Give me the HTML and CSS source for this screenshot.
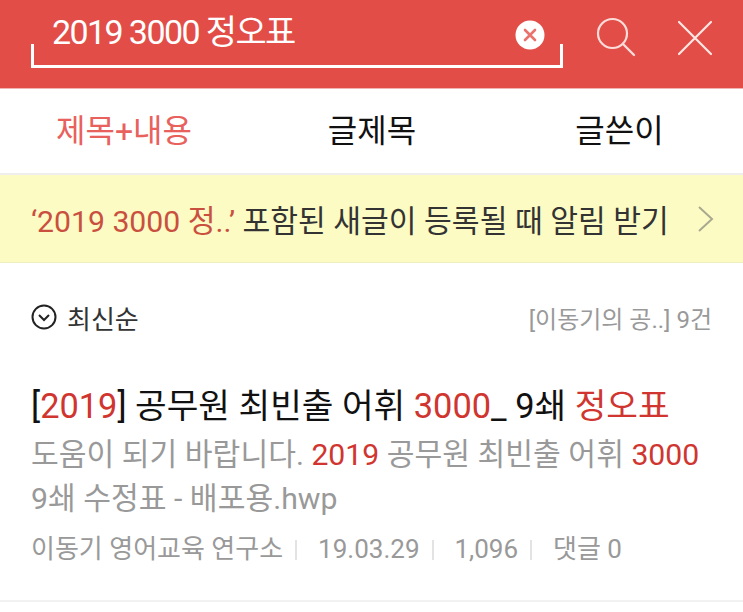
FILE: index.html
```html
<!DOCTYPE html>
<html lang="ko">
<head>
    <meta charset="UTF-8" />
    <link rel="stylesheet" href="styles.css">
</head>
<body>
    <header class="search-bar">
        <div class="search-box">
            <span class="search-text">2019 3000 정오표</span>
            <svg class="clear-icon" width="30" height="30" viewBox="0 0 30 30">
                <circle cx="15" cy="15" r="14.5" fill="#fff" />
                <path d="M10 10L20 20M20 10L10 20" stroke="#e9736c" stroke-width="2.6" stroke-linecap="round" />
            </svg>
        </div>
        <svg class="search-icon" width="40" height="40" viewBox="0 0 40 40">
            <circle cx="16.5" cy="16.5" r="14.5" fill="none" stroke="#fbdcd9" stroke-width="2.2" />
            <path d="M27 27L38 38" stroke="#fbdcd9" stroke-width="2.4" stroke-linecap="round" />
        </svg>
        <svg class="close-icon" width="36" height="36" viewBox="0 0 36 36">
            <path d="M2 2L34 34M34 2L2 34" stroke="#fde6e4" stroke-width="2.2" stroke-linecap="round" />
        </svg>
    </header>

    <nav class="tabs">
        <a class="active">제목+내용</a>
        <a>글제목</a>
        <a>글쓴이</a>
    </nav>

    <div class="notice">
        <p><em>‘2019 3000 정..’</em> 포함된 새글이 등록될 때 알림 받기</p>
        <svg width="18" height="28" viewBox="0 0 18 28">
            <path d="M2 2L15 14L2 26" fill="none" stroke="#a9a98f" stroke-width="2" />
        </svg>
    </div>

    <div class="sort-row">
        <div class="sort">
            <svg width="26" height="26" viewBox="0 0 26 26">
                <circle cx="13" cy="13" r="11.5" fill="none" stroke="#222" stroke-width="2" />
                <path d="M8 11L13 16L18 11" fill="none" stroke="#222" stroke-width="2" />
            </svg>
            <span>최신순</span>
        </div>
        <div class="count">[이동기의 공..] 9건</div>
    </div>

    <article class="result">
        <h3>[<b>2019</b>] 공무원 최빈출 어휘 <b>3000</b>_ 9쇄 <b>정오표</b></h3>
        <p class="summary">도움이 되기 바랍니다. <b>2019</b> 공무원 최빈출 어휘 <b>3000</b><br>9쇄 수정표 - 배포용.hwp</p>
        <div class="meta">
            <span>이동기 영어교육 연구소</span>
            <span>19.03.29</span>
            <span>1,096</span>
            <span>댓글 0</span>
        </div>
    </article>
</body>
</html>
```

FILE: styles.css
```css
body {
    margin: 0;
    font-family: Roboto, "Noto Sans CJK KR", sans-serif;
    background-color: #fff;
    color: #111;
    overflow: hidden;
}
.search-bar {
    height: 88px;
    background-color: #e34d47;
    border-bottom: 1px solid #f0b5b1;
    padding: 0 30px 0 31px;
    display: flex;
    align-items: flex-start;
}
.search-box {
    width: 532px;
    height: 48px;
    margin-top: 20px;
    border: solid #fff;
    border-width: 0 3px 3px 3px;
    border-image: linear-gradient(to bottom, transparent 0, transparent 26px, #fff 26px) 1;
    display: flex;
    align-items: flex-start;
    justify-content: space-between;
    padding: 0 15px 0 18px;
    box-sizing: border-box;
}
.search-text {
    color: #fff;
    font-size: 34px;
    line-height: 24px;
    letter-spacing: -1.6px;
}
.search-icon {
    margin: 17px 0 0 33px;
}
.close-icon {
    margin: 20px 0 0 41px;
}
.tabs {
    height: 84px;
    display: grid;
    grid-template-columns: 248px 248px 247px;
    align-items: center;
    text-align: center;
    font-size: 32px;
    line-height: 38px;
    border-bottom: 2px solid #eee;
}
.tabs a {
    color: #111;
}
.tabs .active {
    color: #e8615c;
}
.notice {
    height: 87px;
    background-color: #fdfbc4;
    border-bottom: 1px solid #efeebd;
    display: flex;
    align-items: center;
    justify-content: space-between;
    padding: 0 28px 0 31px;
    font-size: 30.2px;
    color: #333;
}
.notice p {
    margin: 0;
}
.notice em {
    font-style: normal;
    color: #c9503f;
}
.sort-row {
    display: flex;
    justify-content: space-between;
    align-items: center;
    padding: 37px 31px 0;
    height: 34px;
}
.sort {
    display: flex;
    align-items: center;
    gap: 10px;
    font-size: 26px;
    color: #333;
}
.count {
    font-size: 24px;
    color: #999;
}
.result {
    margin-top: 50px;
    padding: 0 31px;
    height: 216px;
    border-bottom: 2px solid #f2f2f2;
}
.result h3 {
    margin: 0;
    font-size: 34.4px;
    font-weight: 400;
    line-height: 44px;
    color: #111;
}
.result b {
    font-weight: 400;
    color: #d0352f;
}
.summary {
    margin: 5px 0 0;
    font-size: 30.2px;
    line-height: 44px;
    color: #999;
}
.meta {
    margin-top: 9px;
    font-size: 26px;
    line-height: 38px;
    color: #999;
    display: flex;
}
.meta span + span {
    margin-left: 12px;
}
.meta span + span::before {
    content: "";
    display: inline-block;
    width: 2px;
    height: 20px;
    margin-right: 21px;
    background-color: #e3e3e3;
    vertical-align: -2px;
}
```
